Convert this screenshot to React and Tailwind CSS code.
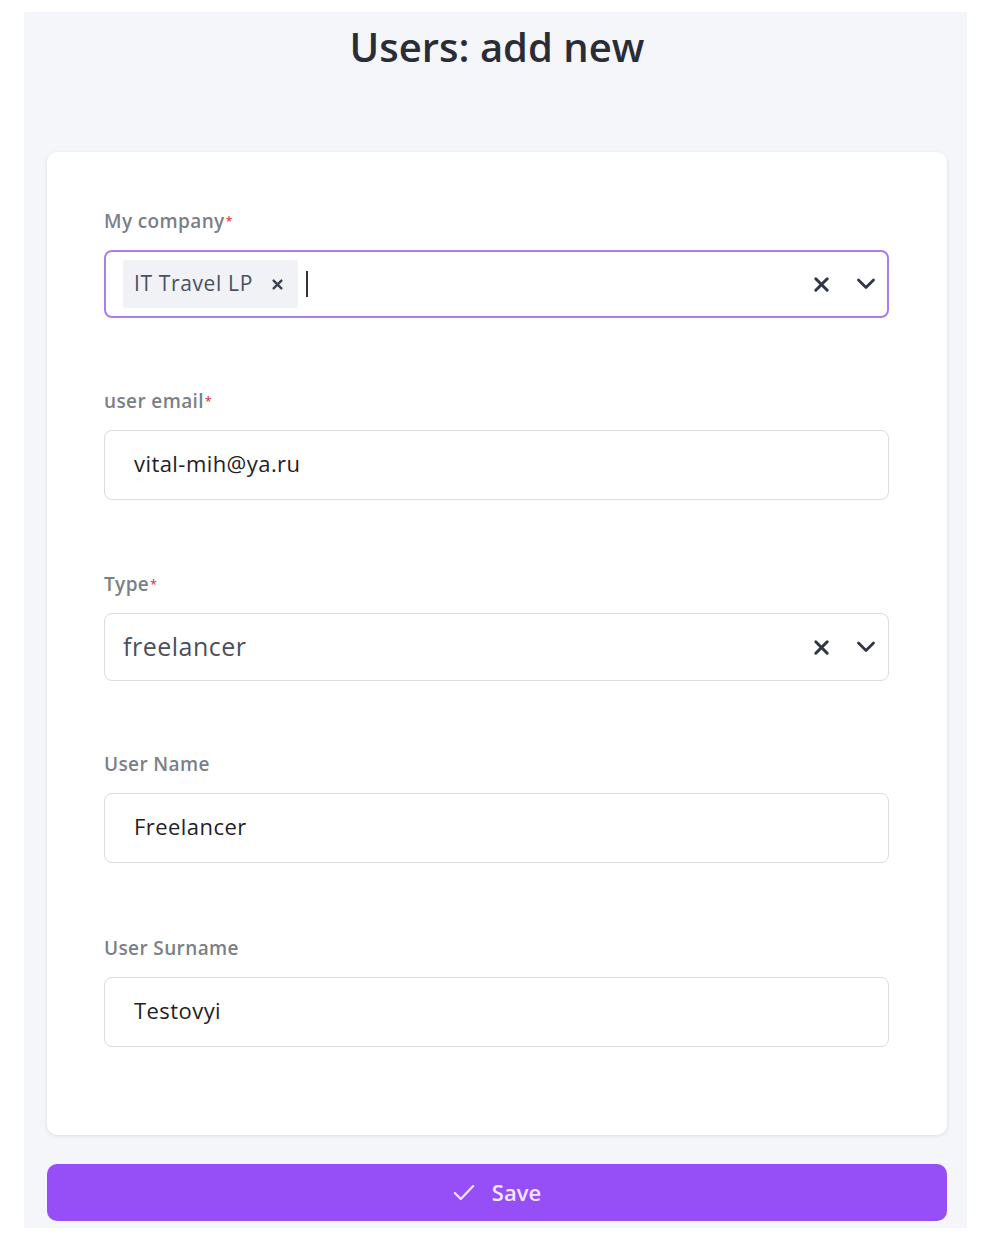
import React from "react";

const font = { fontFamily: '"Open Sans", "Liberation Sans", sans-serif' };

function XIcon({ className, w = 3.2 }) {
  return (
    <svg viewBox="0 0 20 20" className={className} fill="none" stroke="currentColor" strokeWidth={w} strokeLinecap="round">
      <path d="M4 4 L16 16 M16 4 L4 16" />
    </svg>
  );
}

function Chevron({ className }) {
  return (
    <svg viewBox="0 0 20 12" className={className} fill="none" stroke="currentColor" strokeWidth="2.8" strokeLinecap="round" strokeLinejoin="round">
      <path d="M2.5 2 L10 9.5 L17.5 2" />
    </svg>
  );
}

function Label({ children, required }) {
  return (
    <div className="h-[24px] leading-[24px] text-[19px] tracking-[0.02em] font-semibold text-[#7b7f87]">
      {children}
      {required && <sup className="text-[#e53e3e] text-[12px] ml-[1px] relative top-[-2px]">*</sup>}
    </div>
  );
}

function TextField({ value }) {
  return (
    <div className="h-[70px] rounded-[8px] border border-[#d9dce1] bg-white flex items-center pb-[3px] pl-[29px] text-[22px] tracking-[0.02em] text-[#1f2127]">
      {value}
    </div>
  );
}

export default function App() {
  return (
    <div className="w-[996px] h-[1250px] bg-white" style={font}>
      <div className="ml-[24px] pt-[12px]">
        <div className="w-[943px] h-[1216px] bg-[#f5f6fa] pl-[23px] pr-[20px]">
          <h1 className="pt-[11px] h-[59px] text-center text-[40px] leading-[48px] font-semibold text-[#2b2d36]">
            Users: add new
          </h1>
          <div className="mt-[81px] h-[983px] bg-white rounded-[10px] shadow-[0_1px_4px_rgba(0,0,0,0.1)] pt-[57px] pl-[57px] pr-[58px]">
            {/* My company */}
            <Label required>My company</Label>
            <div className="mt-[17px] h-[68px] rounded-[8px] border-2 border-[#a97cf0] bg-white flex items-center pl-[17px] pr-[11px]">
              <div className="h-[48px] bg-[#f0f2f6] rounded-[2px] flex items-center pl-[11px] pr-[14px] text-[21px] tracking-[0.03em] text-[#4a5060]">
                <span>IT Travel LP</span>
                <XIcon w={3.6} className="w-[13px] h-[13px] ml-[18px] text-[#3a4150]" />
              </div>
              <div className="ml-[8px] w-[2px] h-[26px] bg-[#333]" />
              <div className="flex-1" />
              <XIcon className="w-[19px] h-[19px] text-[#2f3744]" />
              <Chevron className="w-[20px] h-[12px] ml-[25px] text-[#2f3744]" />
            </div>

            <div className="h-[71px]" />
            <Label required>user email</Label>
            <div className="mt-[17px]"><TextField value="vital-mih@ya.ru" /></div>

            <div className="h-[72px]" />
            <Label required>Type</Label>
            <div className="mt-[17px] h-[68px] rounded-[8px] border border-[#d9dce1] bg-white flex items-center pl-[18px] pr-[12px]">
              <span className="text-[25px] tracking-[0.02em] text-[#4a5060]">freelancer</span>
              <div className="flex-1" />
              <XIcon className="w-[19px] h-[19px] text-[#2f3744]" />
              <Chevron className="w-[20px] h-[12px] ml-[25px] text-[#2f3744]" />
            </div>

            <div className="h-[71px]" />
            <Label>User Name</Label>
            <div className="mt-[17px]"><TextField value="Freelancer" /></div>

            <div className="h-[73px]" />
            <Label>User Surname</Label>
            <div className="mt-[17px]"><TextField value="Testovyi" /></div>
          </div>
          <button className="mt-[29px] w-full h-[57px] rounded-[10px] bg-[#964ff7] flex items-center justify-center text-[#f3e6ff] text-[22px] font-semibold">
            <svg viewBox="0 0 24 18" className="w-[22px] h-[17px] mr-[17px]" fill="none" stroke="currentColor" strokeWidth="2.4" strokeLinecap="round" strokeLinejoin="round">
              <path d="M2 9.5 L8.5 16 L22 2" />
            </svg>
            Save
          </button>
        </div>
      </div>
    </div>
  );
}
